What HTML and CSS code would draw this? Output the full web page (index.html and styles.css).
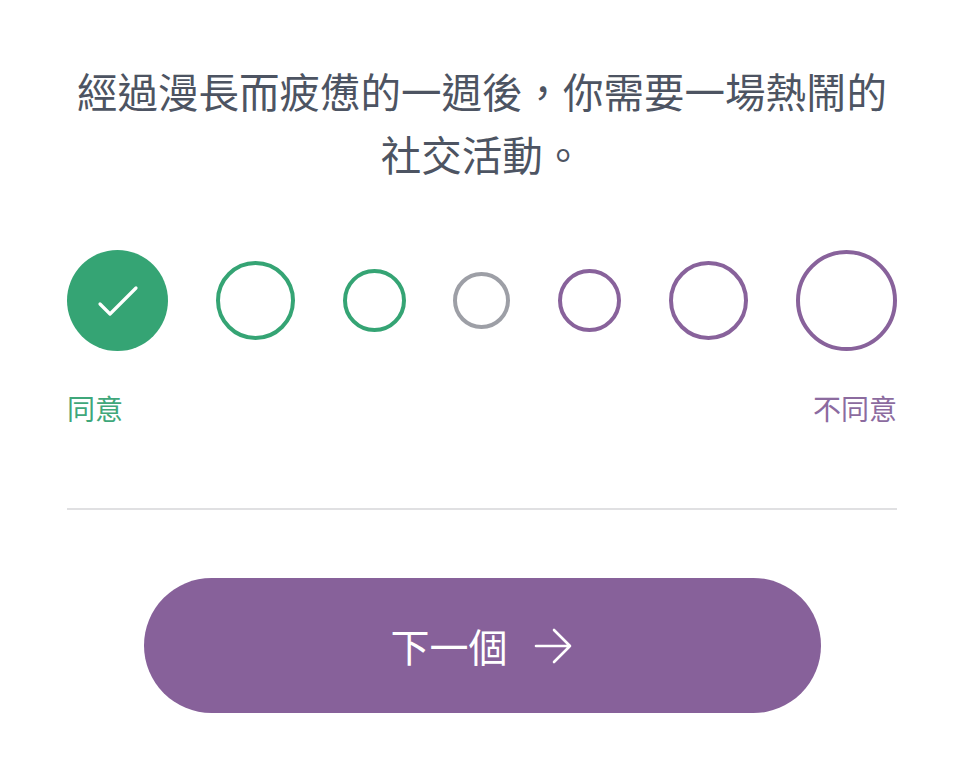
FILE: index.html
```html
<!DOCTYPE html>
<html lang="zh-Hant">
<head>
<meta charset="utf-8">
<title>問卷</title>
<link rel="stylesheet" href="styles.css">
</head>
<body>
<main class="page">
  <h1 class="question">經過漫長而疲憊的一週後，你需要一場熱鬧的社交活動。</h1>

  <div class="scale">
    <span class="dot dot-xl agree selected">
      <svg class="check" viewBox="0 0 101 101" width="101" height="101"><path d="M33 54 L43 64 L69 38" fill="none" stroke="#ffffff" stroke-width="3.2" stroke-linecap="round" stroke-linejoin="round"/></svg>
    </span>
    <span class="dot dot-lg agree"></span>
    <span class="dot dot-md agree"></span>
    <span class="dot dot-sm neutral"></span>
    <span class="dot dot-md disagree"></span>
    <span class="dot dot-lg disagree"></span>
    <span class="dot dot-xl disagree"></span>
  </div>

  <div class="labels">
    <span class="label label-agree">同意</span>
    <span class="label label-disagree">不同意</span>
  </div>

  <hr class="divider">

  <button class="next" type="button">
    <span class="next-text">下一個</span>
    <svg class="arrow" viewBox="0 0 40 36" width="40" height="36"><path d="M2 18 H36 M20 2 L36 18 L20 34" fill="none" stroke="#ffffff" stroke-width="2.6" stroke-linecap="round" stroke-linejoin="round"/></svg>
  </button>
</main>
</body>
</html>
```

FILE: styles.css
```css
html, body {
  margin: 0;
  padding: 0;
  background: #ffffff;
}

body {
  font-family: "Noto Sans CJK TC", "Noto Sans CJK SC", "Noto Sans", sans-serif;
}

.page {
  padding: 0 62px 0 67px;
  display: flex;
  flex-direction: column;
}

.question {
  margin: 59px 0 0;
  font-size: 40.5px;
  font-weight: 400;
  line-height: 63px;
  color: #4d5462;
  text-align: center;
}

.scale {
  margin-top: 65px;
  height: 101px;
  display: flex;
  justify-content: space-between;
  align-items: center;
}

.dot {
  box-sizing: border-box;
  border-radius: 50%;
  border: 4px solid;
  display: flex;
  align-items: center;
  justify-content: center;
  flex: none;
}

.dot-xl { width: 101px; height: 101px; }
.dot-lg { width: 79px; height: 79px; }
.dot-md { width: 63px; height: 63px; }
.dot-sm { width: 57px; height: 57px; }

.agree { border-color: #35a474; }
.neutral { border-color: #9d9fa6; }
.disagree { border-color: #88629b; }

.selected {
  background: #35a474;
  border: none;
}

.check { display: block; }

.labels {
  margin-top: 39px;
  display: flex;
  justify-content: space-between;
  font-size: 28px;
  line-height: 36px;
}

.label-agree { color: #3fa77a; }
.label-disagree { color: #8c6b9f; }

.divider {
  margin: 82px 0 0;
  border: none;
  height: 2px;
  background: #e0e0e2;
}

.next {
  margin: 68px auto 0;
  width: 677px;
  height: 135px;
  border: none;
  border-radius: 68px;
  background: #87619a;
  color: #ffffff;
  display: flex;
  align-items: center;
  justify-content: center;
  gap: 26px;
  font-family: inherit;
  padding: 0;
  cursor: pointer;
}

.next-text {
  font-size: 39px;
  line-height: 1;
}

.arrow { display: block; }
```
